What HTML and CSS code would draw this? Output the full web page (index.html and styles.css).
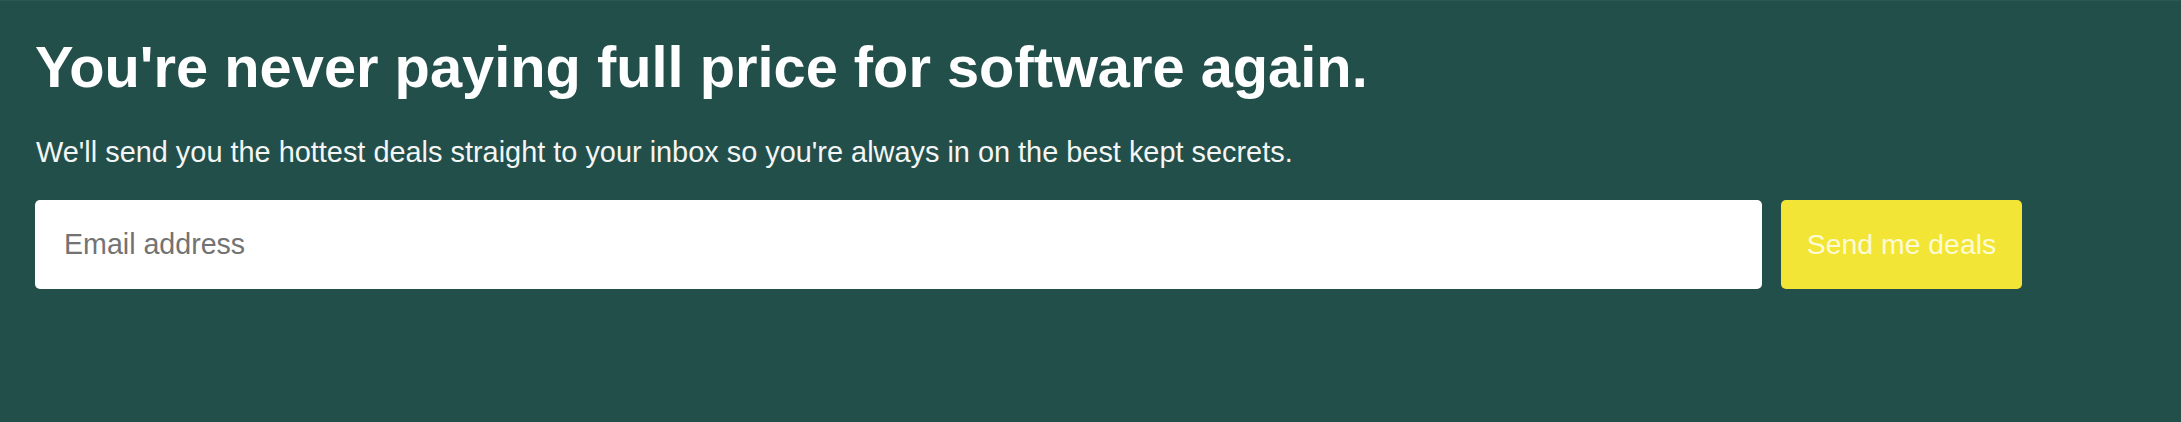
FILE: index.html
```html
<!DOCTYPE html>
<html lang="en">
<head>
<meta charset="utf-8">
<title>Deals newsletter</title>
<link rel="stylesheet" href="styles.css">
</head>
<body>
<section class="signup">
  <h1 class="signup__title">You're never paying full price for software again.</h1>
  <p class="signup__lead">We'll send you the hottest deals straight to your inbox so you're always in on the best kept secrets.</p>
  <form class="signup__form" onsubmit="return false">
    <input class="signup__input" type="email" placeholder="Email address">
    <button class="signup__button" type="submit">Send me deals</button>
  </form>
</section>
</body>
</html>
```

FILE: styles.css
```css
html, body {
  margin: 0;
  padding: 0;
  height: 100%;
}

body {
  background: #234f4b;
  font-family: "Liberation Sans", Arial, sans-serif;
  color: #ffffff;
}

.signup {
  box-sizing: border-box;
  min-height: 100%;
  padding: 33px 35px 0 35px;
  border-top: 1px solid #2c5853;
}

.signup__title {
  margin: 0;
  font-size: 57.8px;
  font-weight: 700;
  line-height: normal;
  color: #ffffff;
}

.signup__lead {
  margin: 36px 0 0 1px;
  font-size: 28.9px;
  line-height: normal;
  color: #f4f6f5;
}

.signup__form {
  display: flex;
  gap: 19px;
  max-width: 1987px;
  margin-top: 31px;
}

.signup__input {
  flex: 1;
  box-sizing: border-box;
  height: 89px;
  padding: 0 29px;
  border: 0;
  border-radius: 5px;
  background: #ffffff;
  font-family: inherit;
  font-size: 28.6px;
  color: #333;
  outline: none;
}

.signup__input::placeholder {
  color: #737373;
}

.signup__button {
  box-sizing: border-box;
  width: 241px;
  height: 89px;
  padding: 0 24px;
  border: 0;
  border-radius: 5px;
  background: #f3e535;
  color: #fdfbd6;
  font-family: inherit;
  font-size: 28.4px;
  cursor: pointer;
}
```
